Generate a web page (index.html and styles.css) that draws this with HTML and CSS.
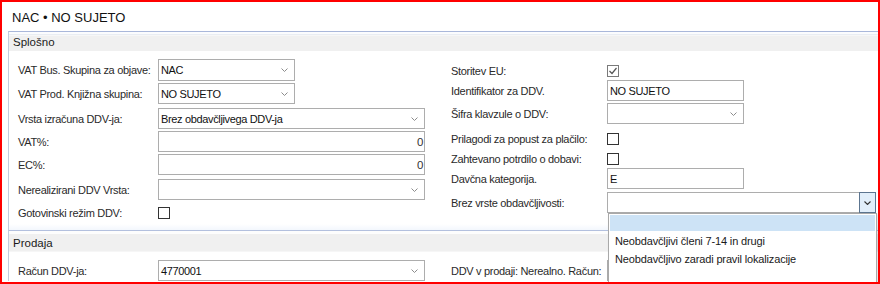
FILE: index.html
```html
<!DOCTYPE html>
<html>
<head>
<meta charset="utf-8">
<link rel="stylesheet" href="styles.css">
</head>
<body>
<div class="frame">
  <div class="title">NAC • NO SUJETO</div>

  <section class="group g1">
    <div class="ghead">Splošno</div>
    <div class="gbody">
      <div class="col left">
        <div class="row h22"><span class="lbl">VAT Bus. Skupina za objave:</span>
          <div class="sel short"><span class="val">NAC</span><svg class="chev" width="7" height="4" viewBox="0 0 7 4"><polyline points="0.5,0.5 3.5,3.5 6.5,0.5"/></svg></div></div>
        <div class="row h21 mt2"><span class="lbl">VAT Prod. Knjižna skupina:</span>
          <div class="sel short"><span class="val">NO SUJETO</span><svg class="chev" width="7" height="4" viewBox="0 0 7 4"><polyline points="0.5,0.5 3.5,3.5 6.5,0.5"/></svg></div></div>
        <div class="row h21 mt4"><span class="lbl">Vrsta izračuna DDV-ja:</span>
          <div class="sel long"><span class="val">Brez obdavčljivega DDV-ja</span><svg class="chev" width="7" height="4" viewBox="0 0 7 4"><polyline points="0.5,0.5 3.5,3.5 6.5,0.5"/></svg></div></div>
        <div class="row h21 mt2"><span class="lbl">VAT%:</span>
          <div class="inp long num">0</div></div>
        <div class="row h21 mt2"><span class="lbl">EC%:</span>
          <div class="inp long num">0</div></div>
        <div class="row h21 mt4"><span class="lbl">Nerealizirani DDV Vrsta:</span>
          <div class="sel long"><span class="val"></span><svg class="chev" width="7" height="4" viewBox="0 0 7 4"><polyline points="0.5,0.5 3.5,3.5 6.5,0.5"/></svg></div></div>
        <div class="row h12 mt7"><span class="lbl">Gotovinski režim DDV:</span>
          <span class="chk"></span></div>
      </div>

      <div class="col right">
        <div class="row h12"><span class="lbl wide">Storitev EU:</span>
          <span class="chk on"><svg width="10" height="10" viewBox="0 0 10 10"><polyline points="1.5,5 4,7.5 8.5,2"/></svg></span></div>
        <div class="row h21 mt3"><span class="lbl wide">Identifikator za DDV.</span>
          <div class="inp short">NO SUJETO</div></div>
        <div class="row h21 mt2"><span class="lbl wide">Šifra klavzule o DDV:</span>
          <div class="sel short"><span class="val"></span><svg class="chev" width="7" height="4" viewBox="0 0 7 4"><polyline points="0.5,0.5 3.5,3.5 6.5,0.5"/></svg></div></div>
        <div class="row h12 mt9"><span class="lbl wide">Prilagodi za popust za plačilo:</span>
          <span class="chk"></span></div>
        <div class="row h12 mt8"><span class="lbl wide">Zahtevano potrdilo o dobavi:</span>
          <span class="chk"></span></div>
        <div class="row h21 mt3"><span class="lbl wide">Davčna kategorija.</span>
          <div class="inp short">E</div></div>
        <div class="row h21 mt3"><span class="lbl wide">Brez vrste obdavčljivosti:</span>
          <div class="sel xlong open"><span class="val"></span>
            <span class="btn"><svg width="7" height="4" viewBox="0 0 7 4"><polyline points="0.5,0.5 3.5,3.5 6.5,0.5"/></svg></span>
            <ul class="list">
              <li class="hl"></li>
              <li>Neobdavčljivi členi 7-14 in drugi</li>
              <li>Neobdavčljivo zaradi pravil lokalizacije</li>
              <li></li>
            </ul>
          </div></div>
      </div>
    </div>
  </section>

  <section class="group g2">
    <div class="ghead">Prodaja</div>
    <div class="gbody">
      <div class="col left">
        <div class="row h21"><span class="lbl">Račun DDV-ja:</span>
          <div class="sel long"><span class="val">4770001</span><svg class="chev" width="7" height="4" viewBox="0 0 7 4"><polyline points="0.5,0.5 3.5,3.5 6.5,0.5"/></svg></div></div>
      </div>
      <div class="col right">
        <div class="row h21"><span class="lbl wide">DDV v prodaji: Nerealno. Račun:</span>
          <div class="sel short"><span class="val"></span></div></div>
      </div>
    </div>
  </section>
</div>
</body>
</html>
```

FILE: styles.css
```css
html, body {
  margin: 0;
  padding: 0;
  background: #fff;
}
body {
  font-family: "Liberation Sans", Arial, sans-serif;
  font-size: 11px;
  color: #222;
}
.frame {
  width: 880px;
  height: 284px;
  box-sizing: border-box;
  border: 2px solid #ff0000;
  overflow: hidden;
  position: relative;
}
.title {
  height: 29px;
  box-sizing: border-box;
  padding: 8px 0 0 10px;
  font-size: 13px;
  line-height: 15px;
  color: #111;
}
.group {
  margin-left: 6px;
  border-left: 1px solid #c3cbdd;
}
.g1 {
  border-top: 1px solid #a9b7da;
  border-bottom: 1px solid #b3c0de;
}
.ghead {
  height: 19px;
  line-height: 21px;
  padding-left: 4px;
  font-size: 11.5px;
  color: #1a1a1a;
  background: linear-gradient(#fbfcfe 0, #fbfcfe 2px, #e9edf3 2px, #e9edf3 3px, #f7f7f7 3px, #f7f7f7 4px, #f0f0f0 4px);
}
.g2 .ghead {
  height: 21px;
  line-height: 25px;
  background: linear-gradient(#fdfdfd 0, #fdfdfd 3px, #f0f0f0 3px, #f0f0f0 20px, #f6f6f6 20px);
}
.g1 .gbody {
  height: 179px;
  background: linear-gradient(#fff 0, #fff 173px, #f3f7fd 179px);
}
.gbody {
  box-sizing: border-box;
  padding: 8px 0 0 9px;
  display: grid;
  grid-template-columns: 433px 1fr;
}
.col {
  display: flex;
  flex-direction: column;
}
.g1 .right {
  margin-top: 6px;
}
.row {
  display: flex;
  align-items: center;
}
.h12 { height: 12px; }
.h21 { height: 21px; }
.h22 { height: 22px; }
.mt2 { margin-top: 2px; }
.mt3 { margin-top: 3px; }
.mt4 { margin-top: 4px; }
.mt7 { margin-top: 7px; }
.mt8 { margin-top: 8px; }
.mt9 { margin-top: 9px; }

.lbl {
  width: 140px;
  flex: none;
  letter-spacing: -0.3px;
  white-space: nowrap;
  color: #2a2a2a;
}
.lbl.wide {
  width: 156px;
}
.sel, .inp {
  position: relative;
  height: 100%;
  box-sizing: border-box;
  border: 1px solid #adadad;
  background: #fff;
  display: flex;
  align-items: center;
  padding-left: 2px;
  color: #111;
  letter-spacing: -0.35px;
  white-space: nowrap;
}
.short { width: 137px; }
.long { width: 267px; }
.xlong { width: 269px; }
.inp.num {
  justify-content: flex-end;
  padding-right: 1px;
  font-size: 11.5px;
  color: #333;
}
.val {
  flex: 1;
}
.chev {
  flex: none;
  margin-right: 6px;
  fill: none;
  stroke: #8c8c8c;
  stroke-width: 1;
}
.chk {
  width: 12px;
  height: 12px;
  box-sizing: border-box;
  border: 1px solid #333;
  background: #fff;
  display: flex;
  align-items: center;
  justify-content: center;
}
.chk.on {
  border-color: #7a7a7a;
}
.chk svg {
  fill: none;
  stroke: #555;
  stroke-width: 1.2;
}
.btn {
  align-self: stretch;
  width: 15px;
  margin: -1px -1px -1px 0;
  border: 1px solid #5c7590;
  background: #e1eefa;
  display: flex;
  align-items: center;
  justify-content: center;
}
.btn svg {
  fill: none;
  stroke: #333;
  stroke-width: 1.1;
}
.list {
  position: absolute;
  z-index: 5;
  top: 20px;
  left: 0;
  width: 269px;
  height: 72px;
  box-sizing: border-box;
  margin: 0;
  padding: 1px 1px 0 1px;
  list-style: none;
  background: #fff;
  border: 1px solid #a9a9a9;
  box-shadow: 1px 1px 2px rgba(0,0,0,0.15);
}
.list li {
  height: 18px;
  line-height: 18px;
  padding-left: 5px;
  color: #1a1a1a;
  letter-spacing: -0.15px;
}
.list li.hl {
  height: 16px;
  margin-bottom: 1px;
  background: #cde3f6;
}
```
